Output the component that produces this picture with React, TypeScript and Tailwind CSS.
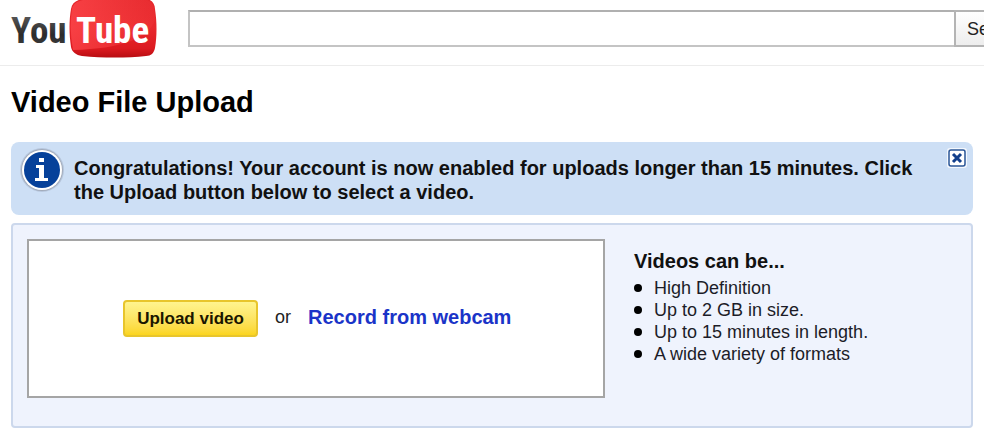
import React from "react";

const limits = [
  "High Definition",
  "Up to 2 GB in size.",
  "Up to 15 minutes in length.",
  "A wide variety of formats",
];

function Logo() {
  return (
    <a href="#" aria-label="YouTube" className="block h-[60px] w-[146px] shrink-0">
      <svg viewBox="0 0 146 60" className="h-full w-full overflow-visible">
        <defs>
          <linearGradient id="tube" x1="0" y1="0" x2="0" y2="1">
            <stop offset="0" stopColor="#e3262b" />
            <stop offset="0.5" stopColor="#e8282d" />
            <stop offset="0.85" stopColor="#dc1a20" />
            <stop offset="1" stopColor="#b80d12" />
          </linearGradient>
          <linearGradient id="gloss" x1="0" y1="0" x2="1" y2="0">
            <stop offset="0" stopColor="#ff4a4e" stopOpacity="0.7" />
            <stop offset="1" stopColor="#ff4a4a" stopOpacity="0.15" />
          </linearGradient>
          <linearGradient id="ink" x1="0" y1="0" x2="0" y2="1">
            <stop offset="0" stopColor="#666" />
            <stop offset="0.6" stopColor="#2b2b2b" />
            <stop offset="1" stopColor="#444" />
          </linearGradient>
        </defs>
        <path
          d="M72 -1C92 -3 118 -3 136 -1C141 0 144 4 144 9C146 22 146 36 144 48C143 53 140 56 135 56C116 58 92 58 71 56C65 55 61 52 60 47C58 34 58 20 60 9C61 3 65 0 72 -1Z"
          fill="url(#tube)"
        />
        <path
          d="M72 0C92 -2 118 -2 136 0C140 1 143 5 143 9Q144 16 144 20Q134 48 62 50Q58 30 61 9C62 4 66 1 72 0Z"
          fill="url(#gloss)"
        />
        <text x="0" y="43" fontSize="37" fontWeight="700" fill="url(#ink)" className="font-['Roboto_Condensed',Roboto,sans-serif]">You</text>
        <text x="65" y="43" fontSize="37" fontWeight="700" fill="#fff" className="font-['Roboto_Condensed',Roboto,sans-serif]">Tube</text>
      </svg>
    </a>
  );
}

function InfoIcon() {
  return (
    <svg viewBox="0 0 46 46" className="h-[46px] w-[46px] shrink-0" aria-hidden="true">
      <circle cx="23" cy="23" r="22" fill="#9fadc4" opacity="0.5" />
      <circle cx="23" cy="23" r="21" fill="#a3acbb" />
      <circle cx="23" cy="23" r="20" fill="#fff" />
      <circle cx="23" cy="23" r="18" fill="#06419a" />
      <path d="M20 11h5v4h-5zM17 18h8v13h4v3H16v-3h4v-10h-3z" fill="#fff" />
    </svg>
  );
}

export default function App() {
  return (
    <div className="bg-white font-['Liberation_Sans',Arial,sans-serif] text-black">
      <header className="flex h-[66px] overflow-hidden border-b border-[#ececec] pl-[11px]">
        <Logo />
        <form className="-mr-[60px] ml-[31px] mt-[10px] flex h-[37px] flex-1" onSubmit={(e) => e.preventDefault()}>
          <input
            type="text"
            aria-label="Search videos"
            className="min-w-0 flex-1 border-2 border-r-0 border-[#c4c4c4] border-t-[#b0b0b0] bg-white px-2 text-lg outline-none"
          />
          <button
            type="submit"
            className="w-[90px] border-2 border-[#b4b4b4] bg-linear-to-b from-white to-[#ededed] pl-[11px] text-left text-lg text-[#222]"
          >
            Search
          </button>
        </form>
      </header>

      <main className="px-[11px] pb-2">
        <h1 className="pt-[19px] text-[29px] leading-[34px] font-bold">Video File Upload</h1>

        <section className="mt-[23px] flex items-start rounded-lg bg-[#cddff5] pt-[5px] pr-[6px] pb-[11px] pl-[8px]">
          <InfoIcon />
          <p className="mt-[9px] ml-[9px] flex-1 pr-5 text-[20px] leading-6 font-bold text-[#111]">
            Congratulations! Your account is now enabled for uploads longer than 15 minutes. Click the Upload button
            below to select a video.
          </p>
          <button type="button" aria-label="Close" className="mt-px shrink-0">
            <svg viewBox="0 0 20 20" className="h-5 w-5">
              <rect x="0" y="0" width="20" height="20" rx="3" fill="#f4f8fd" />
              <rect x="2" y="2" width="16" height="16" rx="2" fill="#fff" stroke="#2a5596" strokeWidth="1.5" />
              <path d="M6 6l8 8M14 6l-8 8" stroke="#123f8c" strokeWidth="3" />
            </svg>
          </button>
        </section>

        <section className="mt-2 flex items-start rounded-sm border-2 border-[#ccd8ec] bg-[#eff3fd] pt-[14px] pr-4 pb-[28px] pl-[14px]">
          <div className="flex h-[159px] w-3/5 max-w-[578px] min-w-[420px] grow items-center border-2 border-[#a5a5a5] bg-white pl-[94px]">
            <button
              type="button"
              className="h-[37px] w-[135px] rounded-[4px] border-2 border-[#e8c52c] bg-linear-to-b from-[#fff48f] to-[#fbd51c] text-[17px] font-bold text-[#1a1600]"
            >
              Upload video
            </button>
            <div className="flex items-center gap-[17px] pb-1 pl-[17px] leading-6">
              <span className="text-[18px] text-[#222]">or</span>
              <a href="#" className="text-[20px] font-bold text-[#1a34c8]">
                Record from webcam
              </a>
            </div>
          </div>
          <div className="ml-[29px] pt-[10px]">
            <h2 className="text-[20px] leading-6 font-bold text-[#111]">Videos can be...</h2>
            <ul className="mt-1 text-[18px] leading-[22px] text-[#1c1c28]">
              {limits.map((item) => (
                <li key={item} className="flex items-center">
                  <span className="mr-3 h-2 w-2 rounded-full bg-black" />
                  {item}
                </li>
              ))}
            </ul>
          </div>
        </section>
      </main>
    </div>
  );
}
